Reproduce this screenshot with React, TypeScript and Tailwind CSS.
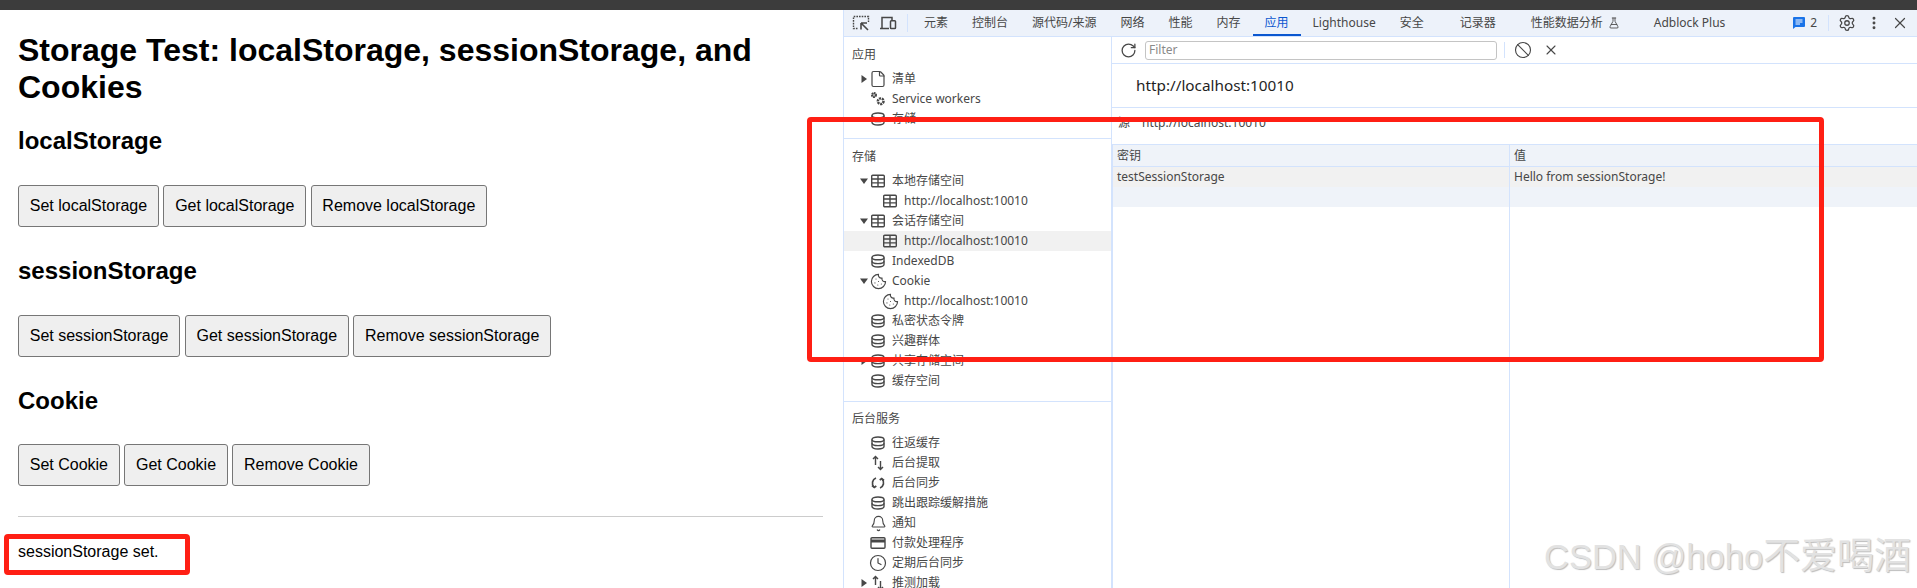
import React from "react";
import { Ban, Bell, Clock, Cookie, File, FlaskConical, MoreVertical, RotateCw, Settings, X } from "lucide-react";

const TableIcon = () => (
  <svg width="16" height="14" viewBox="0 0 16 14" fill="none" stroke="#474747" strokeWidth="1.4">
    <rect x="1.7" y="1.2" width="12.6" height="11.6" rx="1" />
    <path d="M1.7 5h12.6M1.7 8.900h12.600M8 1.200v11.600" />
  </svg>
);

const DbIcon = () => (
  <svg width="16" height="14" viewBox="0 0 16 14" fill="none" stroke="#474747" strokeWidth="1.4">
    <path d="M2 3.400C2 2 4.700 1 8 1s6 1 6 2.400v7.200C14 12 11.300 13 8 13s-6-1-6-2.400z" />
    <path d="M2 3.400C2 4.800 4.700 5.800 8 5.800s6-1 6-2.400M2 7.200c0 1.400 2.700 2.400 6 2.400s6-1 6-2.400" />
  </svg>
);

const UpDownIcon = () => (
  <svg width="16" height="16" viewBox="0 0 16 16" fill="none" stroke="#474747" strokeWidth="1.4">
    <path d="M5.500 10V1.500M3 4l2.500-2.600L8 4M10.500 6V14.500M8 12l2.500 2.600L13 12" />
  </svg>
);

const SyncIcon = () => (
  <svg width="16" height="16" viewBox="0 0 16 16" fill="none" stroke="#474747" strokeWidth="1.7">
    <path d="M6 3A5.500 5.500 0 0 0 4 12M10 13A5.500 5.500 0 0 0 12 4" />
    <path d="M2 10.500l2.300 2 2-1.500M14 5.500l-2.300-2-2 1.500" />
  </svg>
);

const GearsIcon = () => (
  <svg width="18" height="18" viewBox="0 0 18 18" fill="none" stroke="#474747">
    <circle cx="4.500" cy="4.500" r="2.300" strokeWidth="2.200" strokeDasharray="1.800 0.600" />
    <circle cx="4.500" cy="4.500" r="1.500" strokeWidth="0.800" />
    <circle cx="12" cy="11.500" r="3.200" strokeWidth="2.800" strokeDasharray="2.300 0.900" />
  </svg>
);

const CardIcon = () => (
  <svg width="16" height="14" viewBox="0 0 16 14" fill="none" stroke="#474747" strokeWidth="1.400">
    <rect x="1" y="1.700" width="14" height="10.600" rx="1" />
    <path d="M1 5h14" strokeWidth="3" />
  </svg>
);

const InspectIcon = () => (
  <svg width="18" height="16" viewBox="0 0 18 16" fill="none" stroke="#474747" strokeWidth="1.400">
    <path d="M6 1.500H1.500v12H6" strokeDasharray="1.600 1.100" />
    <path d="M7 1.500h9.500V7" strokeDasharray="1.600 1.100" />
    <path d="M9 8v6.500M9 8h6M9 8l7 7" strokeWidth="1.600" />
  </svg>
);

const DeviceIcon = () => (
  <svg width="18" height="16" viewBox="0 0 18 16" fill="none" stroke="#474747" strokeWidth="1.500">
    <path d="M1 13.500h9M3 13.500V2.500h10V5" />
    <rect x="11.500" y="5.800" width="5" height="7.700" rx="0.800" />
  </svg>
);

const ChatIcon = () => (
  <svg width="12" height="12" viewBox="0 0 12 12">
    <path d="M0 1a1 1 0 0 1 1-1h10a1 1 0 0 1 1 1v8a1 1 0 0 1-1 1H2.500L0 12z" fill="#1a73e8" />
    <path d="M2.500 3h7M2.500 5h7M2.500 7h4.500" stroke="#fff" />
  </svg>
);

const Arrow = ({ open }: { open?: boolean }) => (
  <svg width="8" height="8" viewBox="0 0 8 8" fill="#474747">
    {open ? <path d="M0 1.500h8L4 7z" /> : <path d="M1.500 0v8L7 4z" />}
  </svg>
);

const small = "text-[#474747]";

const Row = ({
  icon,
  label,
  child,
  arrow,
  selected,
}: {
  icon: React.ReactNode;
  label: string;
  child?: boolean;
  arrow?: "open" | "closed";
  selected?: boolean;
}) => (
  <div className={`flex h-[20px] items-center ${child ? "pl-[26px]" : "pl-[14px]"} ${selected ? "bg-[#f1f1f1]" : ""}`}>
    <span className="flex w-[12px] justify-center">{arrow && <Arrow open={arrow === "open"} />}</span>
    <span className="flex w-[16px] justify-center">{icon}</span>
    <span className="ml-[6px] whitespace-nowrap">{label}</span>
  </div>
);

const Heading = ({ children }: { children: React.ReactNode }) => (
  <div className="flex h-[20px] items-center pl-[8px]">{children}</div>
);

const lucideSmall = { size: 17, color: "#474747", strokeWidth: 1.6, className: "shrink-0" };

const Sidebar = () => (
  <div className={`flex w-[268px] shrink-0 flex-col overflow-hidden border-r border-r-[#d3e3fd] ${small}`}>
    <div className="h-[102px] shrink-0 border-b border-b-[#d3e3fd] pt-[8px]">
      <Heading>应用</Heading>
      <div className="mt-[4px]">
        <Row icon={<File {...lucideSmall} size={18} />} label="清单" arrow="closed" />
        <Row icon={<GearsIcon />} label="Service workers" />
        <Row icon={<DbIcon />} label="存储" />
      </div>
    </div>
    <div className="h-[263px] shrink-0 border-b border-b-[#d3e3fd] pt-[8px]">
      <Heading>存储</Heading>
      <div className="mt-[4px]">
        <Row icon={<TableIcon />} label="本地存储空间" arrow="open" />
        <Row icon={<TableIcon />} label="http://localhost:10010" child />
        <Row icon={<TableIcon />} label="会话存储空间" arrow="open" />
        <Row icon={<TableIcon />} label="http://localhost:10010" child selected />
        <Row icon={<DbIcon />} label="IndexedDB" />
        <Row icon={<Cookie {...lucideSmall} />} label="Cookie" arrow="open" />
        <Row icon={<Cookie {...lucideSmall} />} label="http://localhost:10010" child />
        <Row icon={<DbIcon />} label="私密状态令牌" />
        <Row icon={<DbIcon />} label="兴趣群体" />
        <Row icon={<DbIcon />} label="共享存储空间" arrow="closed" />
        <Row icon={<DbIcon />} label="缓存空间" />
      </div>
    </div>
    <div className="pt-[7px]">
      <Heading>后台服务</Heading>
      <div className="mt-[4px]">
        <Row icon={<DbIcon />} label="往返缓存" />
        <Row icon={<UpDownIcon />} label="后台提取" />
        <Row icon={<SyncIcon />} label="后台同步" />
        <Row icon={<DbIcon />} label="跳出跟踪缓解措施" />
        <Row icon={<Bell {...lucideSmall} />} label="通知" />
        <Row icon={<CardIcon />} label="付款处理程序" />
        <Row icon={<Clock {...lucideSmall} size={18} />} label="定期后台同步" />
        <Row icon={<UpDownIcon />} label="推测加载" arrow="closed" />
      </div>
    </div>
  </div>
);

const tabs = ["元素", "控制台", "源代码/来源", "网络", "性能", "内存"];

const TabBar = () => (
  <div className={`flex h-[27px] shrink-0 items-center border-b border-b-[#d3e3fd] bg-[#edf2fa] ${small}`}>
    <span className="ml-[8px] flex w-[18px] justify-center">
      <InspectIcon />
    </span>
    <span className="ml-[9px] flex w-[18px] justify-center">
      <DeviceIcon />
    </span>
    <span className="ml-[10px] h-[18px] w-px bg-[#d3e3fd]" />
    <div className="ml-[4px] flex h-full items-center">
      {tabs.map((name) => (
        <span key={name} className="whitespace-nowrap px-[12px]">
          {name}
        </span>
      ))}
      <span className="flex h-full items-center whitespace-nowrap border-b-2 border-b-[#0b57d0] px-[12px] pt-[2px] text-[#0b57d0]">
        应用
      </span>
      <span className="px-[12px]">Lighthouse</span>
      <span className="pl-[12px] pr-[18px]">安全</span>
      <span className="px-[18px]">记录器</span>
      <span className="flex items-center gap-[5px] px-[17px]">
        性能数据分析
        <FlaskConical size={12} color="#474747" strokeWidth={1.7} />
      </span>
      <span className="px-[17px]">Adblock Plus</span>
    </div>
    <div className="ml-auto flex items-center">
      <ChatIcon />
      <span className="ml-[5px]">2</span>
      <span className="ml-[11px] h-[16px] w-px bg-[#d3e3fd]" />
      <span className="ml-[9px]">
        <Settings size={18} color="#474747" strokeWidth={1.7} />
      </span>
      <span className="ml-[10px]">
        <MoreVertical size={16} color="#474747" strokeWidth={2.4} />
      </span>
      <span className="ml-[9px] mr-[8px]">
        <X size={18} color="#474747" strokeWidth={1.6} />
      </span>
    </div>
  </div>
);

const StoragePane = () => (
  <div className={`flex min-w-0 flex-1 flex-col ${small}`}>
    <div className="flex h-[27px] shrink-0 items-center border-b border-b-[#d3e3fd]">
      <span className="ml-[8px]">
        <RotateCw size={17} color="#474747" strokeWidth={1.8} />
      </span>
      <div className="ml-[8px] flex h-[19px] w-[352px] items-center rounded-[3px] border border-[#c4c4c4] pl-[3px] text-[#8a8a8a]">
        Filter
      </div>
      <span className="ml-[7px] h-[16px] w-px bg-[#d3e3fd]" />
      <span className="ml-[9px]">
        <Ban size={18} color="#474747" strokeWidth={1.5} />
      </span>
      <span className="ml-[11px]">
        <X size={16} color="#474747" strokeWidth={1.6} />
      </span>
    </div>
    <div className="flex h-[44px] shrink-0 items-center border-b border-b-[#d3e3fd] pl-[24px] text-[15.300px] text-[#1f1f1f]">
      http://localhost:10010
    </div>
    <div className="flex h-[36px] shrink-0 items-start pl-[6px] pt-[6px]">
      <span className="w-[24px]">源</span>
      <span>http://localhost:10010</span>
    </div>
    <div className="grid flex-1 grid-cols-[397px_1fr] grid-rows-[22px_20px_20px_1fr] border-l border-t border-[#d3e3fd]">
      <div className="flex items-center border-b border-r border-[#d3e3fd] bg-[#eff3f9] pl-[4px]">密钥</div>
      <div className="flex items-center border-b border-[#d3e3fd] bg-[#eff3f9] pl-[4px]">值</div>
      <div className="flex items-center border-r border-[#d3e3fd] bg-[#f1f1f1] pl-[4px]">testSessionStorage</div>
      <div className="flex items-center bg-[#f1f1f1] pl-[4px]">Hello from sessionStorage!</div>
      <div className="border-r border-[#d3e3fd] bg-[#eff3f9]" />
      <div className="bg-[#eff3f9]" />
      <div className="border-r border-[#d3e3fd]" />
      <div />
    </div>
  </div>
);

const PageButton = ({ label }: { label: string }) => (
  <button className="h-[42px] rounded-[3px] border border-[#767676] bg-[#efefef] px-[10.750px] text-[16px] text-black">
    {label}
  </button>
);

const ButtonGroup = ({ name }: { name: string }) => (
  <div className="mt-[30px] flex gap-[4.500px]">
    <PageButton label={`Set ${name}`} />
    <PageButton label={`Get ${name}`} />
    <PageButton label={`Remove ${name}`} />
  </div>
);

const TestPage = () => (
  <div className="w-[843px] shrink-0 px-[18px] pt-[22px] font-['Liberation_Sans',Arial,sans-serif] text-black">
    <h1 className="w-[770px] text-[32px] font-bold leading-[37px]">
      Storage Test: localStorage, sessionStorage, and Cookies
    </h1>
    <h2 className="mt-[21px] text-[24px] font-bold leading-[28px]">localStorage</h2>
    <ButtonGroup name="localStorage" />
    <h2 className="mt-[30px] text-[24px] font-bold leading-[28px]">sessionStorage</h2>
    <ButtonGroup name="sessionStorage" />
    <h2 className="mt-[30px] text-[24px] font-bold leading-[27px]">Cookie</h2>
    <ButtonGroup name="Cookie" />
    <hr className="mt-[30px] w-[805px] border-t border-[#cccccc]" />
    <p className="mt-[26px] text-[16px] leading-[18px]">sessionStorage set.</p>
  </div>
);

export default function App() {
  return (
    <div className="relative h-[588px] w-[1917px] overflow-hidden bg-white">
      <div className="h-[10px] bg-[#3c3c3c]" />
      <div className="flex h-[578px]">
        <TestPage />
        <div className="flex min-w-0 flex-1 flex-col border-l border-l-[#d3e3fd] font-['Noto_Sans','Noto_Sans_CJK_SC',sans-serif] text-[12px]">
          <TabBar />
          <div className="flex min-h-0 flex-1">
            <Sidebar />
            <StoragePane />
          </div>
        </div>
      </div>
      {/* annotations drawn over the screenshot */}
      <div className="absolute left-[807px] top-[117px] h-[245px] w-[1017px] rounded-[4px] border-[5px] border-[#ff1f14]" />
      <div className="absolute left-[4px] top-[534px] h-[41px] w-[186px] rounded-[4px] border-[5px] border-[#ff1f14]" />
      <div className="absolute left-[1544px] top-[535px] whitespace-nowrap font-['Liberation_Sans','Noto_Sans_CJK_SC',sans-serif] leading-[44px] text-[#e2e2e2] [text-shadow:1px_1px_1px_#bdbdbd]">
        <span className="text-[34.500px]">CSDN @hoho</span>
        <span className="text-[37px]">不爱喝酒</span>
      </div>
    </div>
  );
}
